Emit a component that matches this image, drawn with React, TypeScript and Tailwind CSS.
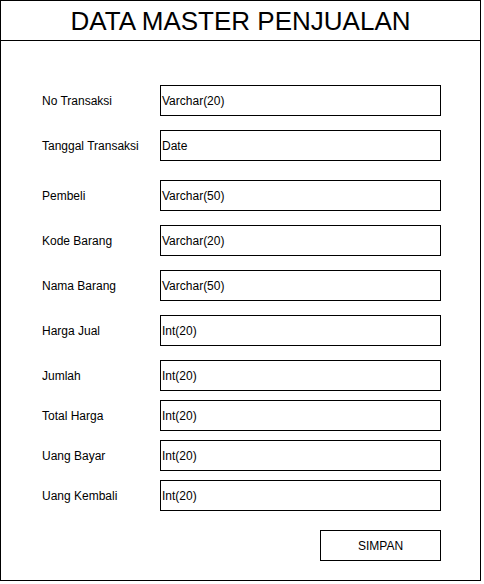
import React from "react";

const rows: { label: string; value: string; mt: string }[] = [
  { label: "No Transaksi", value: "Varchar(20)", mt: "mt-[44px]" },
  { label: "Tanggal Transaksi", value: "Date", mt: "mt-[14px]" },
  { label: "Pembeli", value: "Varchar(50)", mt: "mt-[19px]" },
  { label: "Kode Barang", value: "Varchar(20)", mt: "mt-[14px]" },
  { label: "Nama Barang", value: "Varchar(50)", mt: "mt-[14px]" },
  { label: "Harga Jual", value: "Int(20)", mt: "mt-[14px]" },
  { label: "Jumlah", value: "Int(20)", mt: "mt-[14px]" },
  { label: "Total Harga", value: "Int(20)", mt: "mt-[9px]" },
  { label: "Uang Bayar", value: "Int(20)", mt: "mt-[9px]" },
  { label: "Uang Kembali", value: "Int(20)", mt: "mt-[9px]" },
];

export default function App() {
  return (
    <div className="w-[484px] h-[584px] bg-white" style={{ fontFamily: '"Liberation Sans", Arial, sans-serif' }}>
      <div className="w-[481px] h-[581px] border border-black flex flex-col">
        <div className="h-[40px] shrink-0 border-b border-black flex items-center justify-center text-[26px] text-black leading-none">
          DATA MASTER PENJUALAN
        </div>
        {rows.map((r) => (
          <div key={r.label} className={`${r.mt} flex items-center h-[31px] shrink-0`}>
            <div className="w-[159px] pl-[41px] text-[12px] text-black leading-none">{r.label}</div>
            <div className="w-[281px] h-[31px] border border-black flex items-center pl-[1px] text-[12px] text-black leading-none">
              {r.value}
            </div>
          </div>
        ))}
        <div className="mt-[19px] flex shrink-0">
          <div className="ml-[319px] w-[121px] h-[31px] border border-black flex items-center justify-center text-[12px] text-black leading-none">
            SIMPAN
          </div>
        </div>
      </div>
    </div>
  );
}
